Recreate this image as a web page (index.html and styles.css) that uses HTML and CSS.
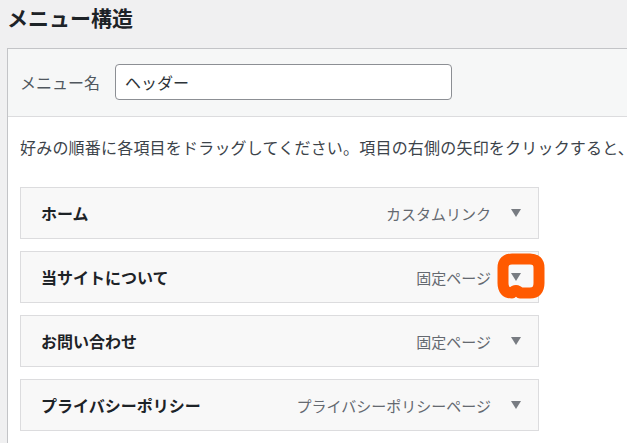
FILE: index.html
```html
<!DOCTYPE html>
<html lang="ja">
<head>
    <meta charset="utf-8">
    <title>メニュー構造</title>
    <link rel="stylesheet" href="styles.css">
</head>
<body>
    <h2 class="title">メニュー構造</h2>

    <div class="panel">
        <div class="panel-head">
            <label for="menu-name">メニュー名</label>
            <input type="text" id="menu-name" value="ヘッダー">
        </div>

        <div class="panel-body">
            <p class="hint">好みの順番に各項目をドラッグしてください。項目の右側の矢印をクリックすると、</p>

            <ul class="menu-items">
                <li class="menu-item">
                    <span class="item-title">ホーム</span>
                    <span class="item-type">カスタムリンク</span>
                    <span class="item-arrow"></span>
                </li>
                <li class="menu-item">
                    <span class="item-title">当サイトについて</span>
                    <span class="item-type">固定ページ</span>
                    <span class="item-arrow"></span>
                    <!-- annotation -->
                    <svg class="mark" width="48" height="46" viewBox="0 0 48 46">
                        <path d="M15 6 L33 6 Q42 6 42 15 L42 30 Q42 40 33 40 L23 40 Q19 35 15 40 Q6 40 6 30 L6 15 Q6 6 15 6 Z" fill="none" stroke="#ff5a00" stroke-width="11" stroke-linejoin="round"/>
                    </svg>
                </li>
                <li class="menu-item">
                    <span class="item-title">お問い合わせ</span>
                    <span class="item-type">固定ページ</span>
                    <span class="item-arrow"></span>
                </li>
                <li class="menu-item">
                    <span class="item-title">プライバシーポリシー</span>
                    <span class="item-type">プライバシーポリシーページ</span>
                    <span class="item-arrow"></span>
                </li>
            </ul>
        </div>
    </div>
</body>
</html>
```

FILE: styles.css
```css
body {
    margin: 0;
    background: #f0f0f1;
    font-family: "Noto Sans CJK JP", "Noto Sans", sans-serif;
    color: #3c434a;
    overflow: hidden;
}
.title {
    margin: 0 0 14px;
    padding: 0 7px;
    font-size: 21px;
    line-height: 34px;
    font-weight: bold;
    color: #1d2327;
}
.panel {
    margin-left: 7px;
    width: 700px;
    border: 1px solid #c3c4c7;
    border-right: none;
    background: #fff;
}
.panel-head {
    display: flex;
    align-items: center;
    gap: 15px;
    padding: 15px 12px 16px;
    background: #f6f7f7;
    border-bottom: 1px solid #dcdcde;
}
.panel-head label {
    font-size: 16px;
    color: #50575e;
}
.panel-head input {
    box-sizing: border-box;
    width: 337px;
    height: 36px;
    padding: 0 9px;
    border: 1px solid #8c8f94;
    border-radius: 4px;
    font-family: inherit;
    font-size: 16px;
    color: #2c3338;
}
.panel-body {
    padding: 18px 12px 40px;
}
.hint {
    margin: 0 0 28px;
    font-size: 16px;
    line-height: 24px;
    letter-spacing: 0.2px;
    white-space: nowrap;
}
.menu-items {
    list-style: none;
    margin: 0;
    padding: 0;
    width: 519px;
    display: flex;
    flex-direction: column;
    gap: 12px;
}
.menu-item {
    position: relative;
    box-sizing: border-box;
    height: 52px;
    display: flex;
    align-items: center;
    padding: 0 17px 0 20px;
    border: 1px solid #dcdcde;
    background: #f8f8f8;
}
.item-title {
    font-size: 16px;
    font-weight: bold;
    color: #1d2327;
}
.item-type {
    margin-left: auto;
    margin-right: 20px;
    font-size: 15px;
    color: #646970;
}
.item-arrow {
    width: 0;
    height: 0;
    border-left: 5px solid transparent;
    border-right: 5px solid transparent;
    border-top: 8px solid #787c82;
}
.mark {
    position: absolute;
    left: 476px;
    top: 1px;
}
```
